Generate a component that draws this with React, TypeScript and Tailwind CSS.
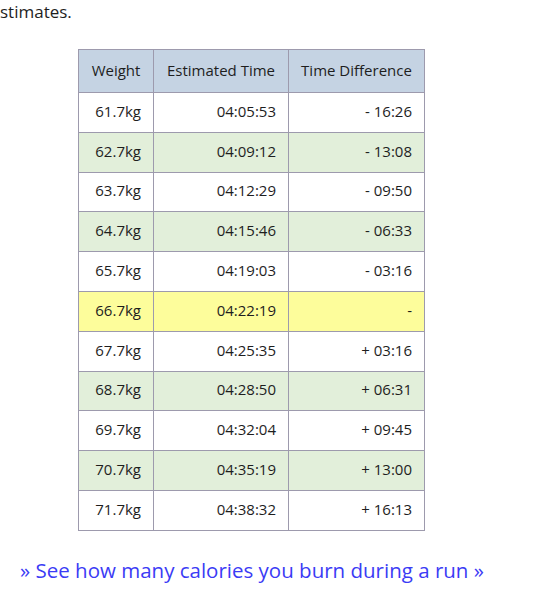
const rows = [
  { w: "61.7kg", t: "04:05:53", d: "- 16:26" },
  { w: "62.7kg", t: "04:09:12", d: "- 13:08" },
  { w: "63.7kg", t: "04:12:29", d: "- 09:50" },
  { w: "64.7kg", t: "04:15:46", d: "- 06:33" },
  { w: "65.7kg", t: "04:19:03", d: "- 03:16" },
  { w: "66.7kg", t: "04:22:19", d: "-" },
  { w: "67.7kg", t: "04:25:35", d: "+ 03:16" },
  { w: "68.7kg", t: "04:28:50", d: "+ 06:31" },
  { w: "69.7kg", t: "04:32:04", d: "+ 09:45" },
  { w: "70.7kg", t: "04:35:19", d: "+ 13:00" },
  { w: "71.7kg", t: "04:38:32", d: "+ 16:13" },
];

export default function App() {
  return (
    <div
      className="min-h-[589px] w-[539px] bg-white text-[#1e1e1e]"
      style={{ fontFamily: '"Open Sans", "DejaVu Sans", sans-serif' }}
    >
      <p className="text-[17px] leading-[24px]">stimates.</p>

      <table className="ml-[78px] mt-[25px] w-[347px] border-collapse text-[15px] leading-[20px]">
        <thead>
          <tr className="h-[43px] bg-[#c5d3e3]">
            <th className="w-[75px] border border-[#9d9aad] pb-[3px] font-normal">Weight</th>
            <th className="w-[135px] border border-[#9d9aad] pb-[3px] font-normal">Estimated Time</th>
            <th className="border border-[#9d9aad] pb-[3px] font-normal">Time Difference</th>
          </tr>
        </thead>
        <tbody>
          {rows.map((r, i) => {
            const bg =
              r.d === "-" ? "bg-[#fdfd9b]" : i % 2 === 1 ? "bg-[#e2efda]" : "bg-white";
            return (
              <tr key={r.w} className={`h-[39.8px] ${bg}`}>
                <td className="border border-[#9d9aad] pb-[3px] pr-[12px] text-right">{r.w}</td>
                <td className="border border-[#9d9aad] pb-[3px] pr-[12px] text-right">{r.t}</td>
                <td className="border border-[#9d9aad] pb-[3px] pr-[12px] text-right">{r.d}</td>
              </tr>
            );
          })}
        </tbody>
      </table>

      <p className="mt-[24px] pl-[20px] text-[20.5px] leading-[30px] text-[#3b3bf5]">
        » See how many calories you burn during a run »
      </p>
    </div>
  );
}
